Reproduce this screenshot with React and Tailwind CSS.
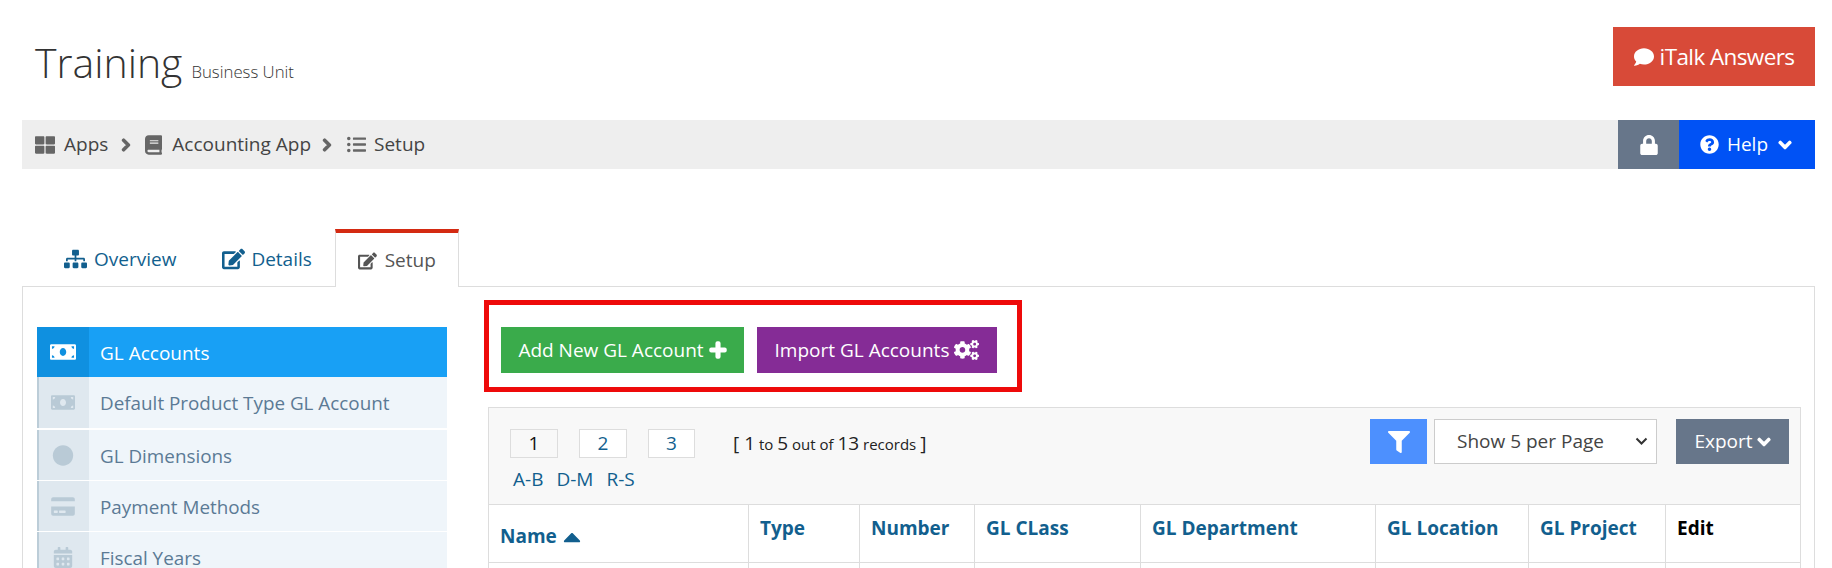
import React from "react";
import { FaThLarge, FaBook, FaListUl, FaChevronRight, FaChevronDown, FaLock, FaQuestionCircle, FaComment, FaSitemap, FaEdit, FaMoneyBill, FaCircle, FaCreditCard, FaCalendarAlt, FaPlus, FaCogs, FaFilter, FaCaretUp } from "react-icons/fa";

const side = [
  { label: "Default Product Type GL Account", Icon: FaMoneyBill, cls: "h-[51px] mb-[2px]" },
  { label: "GL Dimensions", Icon: FaCircle, cls: "h-[50px] mb-px" },
  { label: "Payment Methods", Icon: FaCreditCard, cls: "h-[50px] mb-px" },
  { label: "Fiscal Years", Icon: FaCalendarAlt, cls: "h-[50px] mb-px" },
];

const cols = [
  { label: "Name", w: "w-[260px]" },
  { label: "Type", w: "w-[111px]" },
  { label: "Number", w: "w-[115px]" },
  { label: "GL CLass", w: "w-[166px]" },
  { label: "GL Department", w: "w-[235px]" },
  { label: "GL Location", w: "w-[153px]" },
  { label: "GL Project", w: "w-[137px]" },
  { label: "Edit", w: "w-[135px]" },
];

const heavy = { stroke: "currentColor", strokeWidth: 50 };

export default function App() {
  return (
    <div className="h-[568px] overflow-hidden bg-white pl-[22px] pr-[17px] font-['Open_Sans',sans-serif] text-[#333]">
      <header className="flex h-[120px] justify-between pt-[27px]">
        <div className="flex items-baseline pl-[13px] pt-[5px]">
          <h1 className="text-[41px] font-light leading-[60px] text-[#333]">Training</h1>
          <span className="ml-[9px] text-[16.8px] font-light text-[#333]">Business Unit</span>
        </div>
        <button className="flex h-[59px] w-[202px] items-center justify-center gap-[6px] bg-[#d84a38] text-[22.5px] tracking-[-0.6px] text-white">
          <FaComment className="h-[20px] w-[20px]" />
          iTalk Answers
        </button>
      </header>

      <nav className="flex h-[49px] items-center justify-between bg-[#eeeeee] text-[19px]">
        <div className="flex items-center pl-[13px] text-[#444]">
          <FaThLarge className="h-[20px] w-[20px] text-[#666]" />
          <span className="ml-[9px]">Apps</span>
          <FaChevronRight {...heavy} className="ml-[11px] h-[14px] w-[14px] text-[#666]" />
          <FaBook className="ml-[12px] h-[20px] w-[17px] text-[#666]" />
          <span className="ml-[10px]">Accounting App</span>
          <FaChevronRight {...heavy} className="ml-[9px] h-[14px] w-[14px] text-[#666]" />
          <FaListUl className="ml-[13px] h-[19px] w-[19px] text-[#666]" />
          <span className="ml-[8px]">Setup</span>
        </div>
        <div className="flex h-full text-white">
          <div className="flex w-[61px] items-center justify-center bg-[#67768a]">
            <FaLock className="h-[20px] w-[20px]" />
          </div>
          <div className="flex w-[136px] items-center justify-center bg-[#0052f5] pr-[2px]">
            <FaQuestionCircle className="h-[19px] w-[19px]" />
            <span className="ml-[8px]">Help</span>
            <FaChevronDown {...heavy} className="ml-[10px] h-[14px] w-[14px]" />
          </div>
        </div>
      </nav>

      <div className="relative z-10 ml-[19px] mt-[60px] flex h-[57px] text-[19px]">
        <a className="flex items-center gap-[7px] px-[23px] pt-[3px] text-[#125f8e]">
          <FaSitemap className="h-[20px] w-[23px]" />Overview
        </a>
        <a className="flex items-center gap-[6px] px-[23px] pt-[3px] text-[#125f8e]">
          <FaEdit className="h-[22px] w-[23px]" />Details
        </a>
        <a className="flex h-[58px] w-[124px] items-center gap-[8px] border-x border-t-4 border-x-[#dddddd] border-t-[#d42a12] bg-white px-[22px] pt-[1px] text-[#555]">
          <FaEdit className="h-[22px] w-[23px]" />Setup
        </a>
      </div>

      <section className="flex h-[300px] gap-[41px] border border-[#dddddd] pl-[14px] pr-[13px] pt-[13px]">
        <aside className="mt-[27px] w-[410px] shrink-0 text-[18.85px]">
          <div className="flex h-[50px] items-center bg-[#18a0f5] text-[19px] text-white">
            <span className="flex h-full w-[52px] items-center justify-center bg-[#0f90e0]">
              <FaMoneyBill className="h-[26px] w-[26px]" />
            </span>
            <span className="ml-[11px] pt-[2px]">GL Accounts</span>
          </div>
          {side.map(({ label, Icon, cls }) => (
            <div key={label} className={`flex items-center bg-[#eff5fa] text-[#5b7a95] ${cls}`}>
              <span className="flex h-full w-[52px] items-center justify-center border-l-2 border-[#bccdd8] bg-[#dfe8ef] pr-[2px] text-[#b9cad6]">
                <Icon className="h-[21px] w-[24px]" />
              </span>
              <span className="ml-[11px] pt-[2px]">{label}</span>
            </div>
          ))}
        </aside>

        <main className="min-w-0 flex-1">
          <div className="-ml-1 mb-[15px] flex h-[92px] w-[538px] items-start gap-[13px] border-[5px] border-[#ee0a0a] pl-[12px] pt-[22px] text-[19px] text-white">
            <button className="flex h-[46px] w-[243px] items-center justify-center gap-[5px] bg-[#3aab4b]">
              Add New GL Account <FaPlus {...heavy} className="h-[18px] w-[18px]" />
            </button>
            <button className="flex h-[46px] w-[240px] items-center justify-center gap-[5px] bg-[#852c96]">
              Import GL Accounts <FaCogs className="h-[20px] w-[25px]" />
            </button>
          </div>

          <div className="flex h-[98px] w-[1313px] justify-between border border-[#dddddd] bg-[#f8f8f8] pl-[21px] pr-[11px] pt-[11px]">
            <div>
              <div className="mt-[10px] flex items-center gap-[21px]">
                <span className="flex h-[29px] w-[48px] items-center justify-center border border-[#dddddd] bg-[#f8f8f8] text-[19px] text-[#111]">1</span>
                <span className="flex h-[29px] w-[48px] items-center justify-center border border-[#dddddd] bg-white text-[19px] text-[#125f8e]">2</span>
                <span className="flex h-[29px] w-[47px] items-center justify-center border border-[#dddddd] bg-white text-[19px] text-[#125f8e]">3</span>
                <span className="ml-[17px] text-[15px] text-[#222]">
                  <span className="text-[19px]">[ 1</span> to <span className="text-[19px]">5</span> out of <span className="text-[19px]">13</span> records <span className="text-[19px]">]</span>
                </span>
              </div>
              <div className="mt-[7px] flex gap-[13px] pl-[3px] text-[19px] text-[#125f8e]">
                <span>A-B</span><span>D-M</span><span>R-S</span>
              </div>
            </div>
            <div className="flex items-start">
              <button className="flex h-[45px] w-[57px] items-center justify-center bg-[#4d90fe] text-white">
                <FaFilter className="h-[22px] w-[22px]" />
              </button>
              <div className="relative ml-[7px] h-[45px] w-[223px]">
                <select className="h-full w-full appearance-none border border-[#cccccc] bg-white pl-[22px] pr-[30px] text-[19px] text-[#444]">
                  <option>Show 5 per Page</option>
                </select>
                <svg className="pointer-events-none absolute right-[9px] top-[18px] h-[9px] w-[13px] text-[#333]" viewBox="0 0 13 9" fill="none" stroke="currentColor" strokeWidth="2">
                  <path d="M1.5 1.5 L6.5 6.5 L11.5 1.5" />
                </svg>
              </div>
              <button className="ml-[19px] flex h-[45px] w-[113px] items-center justify-center gap-[4px] bg-[#67768a] text-[19px] text-white">
                Export <FaChevronDown {...heavy} className="h-[14px] w-[14px]" />
              </button>
            </div>
          </div>

          <table className="w-[1313px] table-fixed border-collapse text-[19px] font-bold text-[#125f8e]">
            <thead>
              <tr className="h-[57px]">
                {cols.map((c, i) => (
                  <th key={c.label} className={`${c.w} border border-t-0 border-[#dddddd] pl-[11px] text-left font-bold ${i === 0 ? "align-bottom pb-[11px]" : "align-top pt-[9px]"} ${c.label === "Edit" ? "text-black" : ""}`}>
                    {c.label}
                    {i === 0 && <FaCaretUp className="ml-[3px] inline h-[28px] w-[24px] align-[-8px]" />}
                  </th>
                ))}
              </tr>
            </thead>
            <tbody>
              <tr className="h-[50px]">
                {cols.map((c) => <td key={c.label} className="border border-[#dddddd]"></td>)}
              </tr>
            </tbody>
          </table>
        </main>
      </section>
    </div>
  );
}
